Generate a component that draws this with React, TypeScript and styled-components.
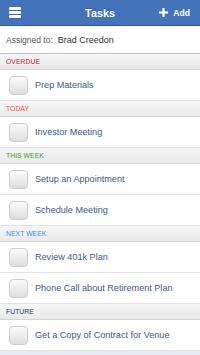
import React from "react";
import styled, { createGlobalStyle } from "styled-components";

const Global = createGlobalStyle`
  html, body { margin: 0; padding: 0; background: #e6ecf3; }
  body { font-family: "Liberation Sans", Arial, sans-serif; -webkit-font-smoothing: antialiased; }
`;

const Page = styled.div`
  width: 200px;
  display: flex;
  flex-direction: column;
`;

const TopBar = styled.header`
  height: 25px;
  background: #4473b9;
  border-bottom: 1px solid #2f5c9c;
  display: grid;
  grid-template-columns: 1fr auto 1fr;
  align-items: center;
  color: #fff;
`;

const MenuButton = styled.div`
  justify-self: start;
  margin-left: 9px;
  width: 12px;
  display: flex;
  flex-direction: column;
  gap: 1px;
`;

const MenuBar = styled.span`
  display: block;
  height: 3px;
  background: #fff;
  border-radius: 1px;
  box-shadow: 0 1px 0 rgba(0, 0, 0, 0.12);
`;

const Title = styled.h1`
  margin: 0;
  font-size: 10.8px;
  font-weight: bold;
  text-shadow: 0 -1px 0 rgba(0, 0, 0, 0.2);
`;

const AddButton = styled.div`
  justify-self: end;
  margin-right: 10px;
  display: flex;
  align-items: center;
  gap: 5px;
  font-size: 8.6px;
  font-weight: bold;
`;

const AssignedRow = styled.div`
  height: 27px;
  background: #fff;
  border-bottom: 1px solid #c4c4c4;
  display: flex;
  align-items: center;
  padding-left: 6px;
  gap: 5px;
`;

const AssignedLabel = styled.span`
  font-size: 8.5px;
  color: #555;
`;

const AssignedName = styled.span`
  font-size: 9px;
  color: #333;
`;

const SectionHeader = styled.div<{ $color: string }>`
  height: 15px;
  background: linear-gradient(#f6f6f6, #e9e9e9);
  border-bottom: 1px solid #d4d4d4;
  display: flex;
  align-items: center;
  padding-left: 6px;
  font-size: 6.8px;
  color: ${(p) => p.$color};
  text-transform: uppercase;
  letter-spacing: 0.05px;
`;

const TaskRow = styled.div`
  height: 30px;
  background: #fff;
  border-bottom: 1px solid #e2e2e2;
  display: flex;
  align-items: center;
  padding-left: 9px;
  gap: 7px;
`;

const Check = styled.span`
  width: 17px;
  height: 17px;
  border: 1px solid #cdcdcd;
  border-radius: 4px;
  background: linear-gradient(#fbfbfb, #dedede);
  box-sizing: content-box;
  flex: none;
`;

const TaskText = styled.span`
  font-size: 9.1px;
  color: #375a8e;
`;

type Section = { label: string; color: string; tasks: string[] };

const sections: Section[] = [
  { label: "Overdue", color: "#d0202e", tasks: ["Prep Materials"] },
  { label: "Today", color: "#e9562c", tasks: ["Investor Meeting"] },
  { label: "This Week", color: "#3a9c2c", tasks: ["Setup an Appointment", "Schedule Meeting"] },
  { label: "Next Week", color: "#3b8fe0", tasks: ["Review 401k Plan", "Phone Call about Retirement Plan"] },
  { label: "Future", color: "#2b3957", tasks: ["Get a Copy of Contract for Venue"] },
];

export default function App() {
  return (
    <>
      <Global />
      <Page>
        <TopBar>
          <MenuButton>
            <MenuBar />
            <MenuBar />
            <MenuBar />
          </MenuButton>
          <Title>Tasks</Title>
          <AddButton>
            <svg width="9" height="9" viewBox="0 0 9 9">
              <rect x="3.4" y="0" width="2.2" height="9" fill="#fff" />
              <rect x="0" y="3.4" width="9" height="2.2" fill="#fff" />
            </svg>
            Add
          </AddButton>
        </TopBar>
        <AssignedRow>
          <AssignedLabel>Assigned to:</AssignedLabel>
          <AssignedName>Brad Creedon</AssignedName>
        </AssignedRow>
        {sections.map((s) => (
          <React.Fragment key={s.label}>
            <SectionHeader $color={s.color}>{s.label}</SectionHeader>
            {s.tasks.map((t) => (
              <TaskRow key={t}>
                <Check />
                <TaskText>{t}</TaskText>
              </TaskRow>
            ))}
          </React.Fragment>
        ))}
      </Page>
    </>
  );
}
